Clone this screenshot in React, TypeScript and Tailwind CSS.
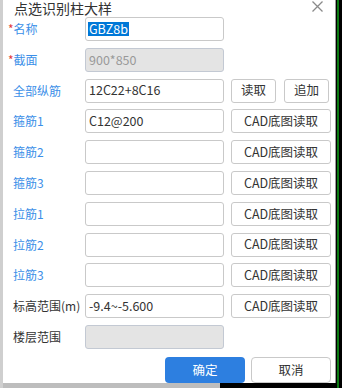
import React from 'react';

const font = { fontFamily: '"Noto Sans CJK SC", "Microsoft YaHei", sans-serif' };

type Row = {
  label: string;
  required?: boolean;
  dark?: boolean;
  value?: string;
  selected?: boolean;
  disabled?: boolean;
  action?: 'cad' | 'pair' | 'none';
};

const rows: Row[] = [
  { label: '名称', required: true, value: 'GBZ8b', selected: true, action: 'none' },
  { label: '截面', required: true, value: '900*850', disabled: true, action: 'none' },
  { label: '全部纵筋', value: '12C22+8C16', action: 'pair' },
  { label: '箍筋1', value: 'C12@200', action: 'cad' },
  { label: '箍筋2', action: 'cad' },
  { label: '箍筋3', action: 'cad' },
  { label: '拉筋1', action: 'cad' },
  { label: '拉筋2', action: 'cad' },
  { label: '拉筋3', action: 'cad' },
  { label: '标高范围(m)', dark: true, value: '-9.4~-5.600', action: 'cad' },
  { label: '楼层范围', dark: true, disabled: true, action: 'none' },
];

const btn =
  'h-6 rounded-[3px] border border-[#c9c9c9] bg-white text-[12.5px] text-[#333] flex items-center justify-center leading-none';

export default function App() {
  return (
    <div className="w-[342px] h-[388px] flex overflow-hidden bg-black" style={font}>
      <div className="w-[3px] h-full bg-[#cfcfcf]" />
      <div className="w-[333px] flex flex-col">
        <div className="h-[383px] bg-white border-r border-[#9a9a9a] flex flex-col">
          {/* title */}
          <div className="h-[17px] pt-[1px] flex items-start justify-between pl-[11px] pr-[12px]">
            <span className="text-[14px] leading-[14px] text-[#333]">点选识别柱大样</span>
            <svg width="11" height="11" viewBox="0 0 11 11">
              <path d="M0.5 0.5 L10.5 10.5 M10.5 0.5 L0.5 10.5" stroke="#8a8a8a" strokeWidth="1.3" fill="none" />
            </svg>
          </div>

          {/* form rows */}
          <div className="flex flex-col gap-[6.8px] pl-[10px]">
            {rows.map((r) => (
              <div key={r.label} className="h-6 flex items-center">
                <div
                  className={`w-[72px] text-[12px] leading-none ${
                    r.dark ? 'text-[#333]' : 'text-[#3b8fe8]'
                  }`}
                >
                  {r.required && <span className="text-[#e23b3b] -ml-[5px]">*</span>}
                  {r.label}
                </div>
                <div
                  className={`w-[139px] h-6 rounded-[3px] border flex items-center px-[2px] text-[12.5px] leading-none ${
                    r.disabled
                      ? 'bg-[#e4e4e4] border-[#c3c9d3] text-[#999]'
                      : 'bg-white border-[#c9c9c9] text-[#333]'
                  }`}
                >
                  {r.value && (
                    <span className={r.selected ? 'bg-[#0078d7] text-white px-[1px] py-[1px]' : 'px-[1px]'}>
                      {r.value}
                    </span>
                  )}
                </div>
                {r.action === 'cad' && <div className={`${btn} ml-[7px] w-[100px]`}>CAD底图读取</div>}
                {r.action === 'pair' && (
                  <div className="ml-[7px] flex gap-[8px]">
                    <div className={`${btn} w-[45px]`}>读取</div>
                    <div className={`${btn} w-[45px]`}>追加</div>
                  </div>
                )}
              </div>
            ))}
          </div>

          {/* footer */}
          <div className="flex justify-end gap-[6px] pr-[4px] mt-[8px]">
            <div className="w-[80px] h-[26px] rounded-[4px] bg-[#2d7fe0] text-white text-[12.5px] flex items-center justify-center">
              确定
            </div>
            <div className="w-[80px] h-[26px] rounded-[4px] border border-[#c9c9c9] bg-white text-[#333] text-[12.5px] flex items-center justify-center">
              取消
            </div>
          </div>
        </div>
        <div className="flex-1 flex">
          <div className="w-[217px] bg-[#bdbdbd]" />
          <div className="flex-1 bg-black" />
        </div>
      </div>
      <div className="flex-1 h-full flex">
        <div className="w-[1px]" />
        <div className="w-[2px] bg-[#0b7a12]" />
      </div>
    </div>
  );
}
